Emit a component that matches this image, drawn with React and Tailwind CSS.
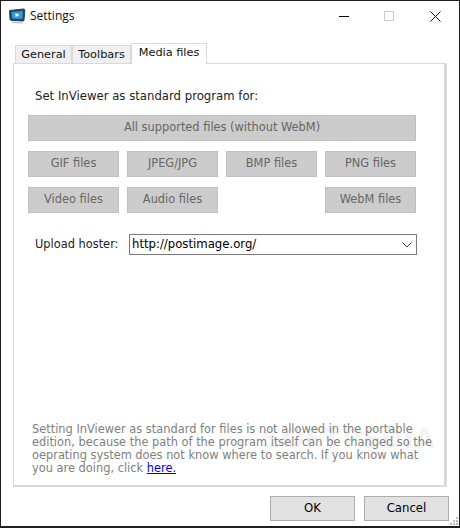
const font = "font-['DejaVu_Sans',sans-serif]";

function FileButton({ label, className = 'w-[91px]' }) {
  return (
    <div className={`${className} h-[26px] flex items-center justify-center bg-[#cccccc] border border-[#bfbfbf] text-[#666666] text-[11.4px]`}>
      {label}
    </div>
  );
}

function Tab({ label, active, className = '' }) {
  if (active) {
    return (
      <div className={`${className} relative z-10 h-[21px] -mb-px pb-[2px] flex items-center justify-center bg-white border border-b-0 border-[#d9d9d9] text-[11.3px] text-[#111111]`}>
        {label}
      </div>
    );
  }
  return (
    <div className={`${className} h-[18px] pt-px flex items-center justify-center bg-[#f0f0f0] border border-b-0 border-[#d9d9d9] text-[11.3px] text-[#111111]`}>
      {label}
    </div>
  );
}

export default function App() {
  return (
    <div className={`${font} relative w-[460px] h-[528px] flex flex-col bg-white border border-[#1f1f1f] border-b-2 overflow-hidden`}>
      {/* title bar */}
      <div className="h-[30px] flex items-center shrink-0">
        <svg width="18" height="16" viewBox="0 0 18 16" className="ml-[7px]">
          <path d="M1.5 2.5 L15.5 1 Q17 1 16.8 2.5 L16 12 Q16 13.2 14.8 13 L3.5 12.5 Q2 12.4 2 11 Z" fill="#2b4252" stroke="#2b4252" strokeWidth="1" />
          <path d="M3.5 4 L15 3 L14.4 11 L4 10.6 Z" fill="#2f9be0" />
          <path d="M7.5 5 L11.5 7 L7.5 9 Z" fill="#ffffff" />
          <path d="M4 14.5 L15 15" stroke="#b5b5b5" strokeWidth="1.2" />
        </svg>
        <span className="ml-[4px] text-[12px] text-[#111111] font-['Open_Sans',sans-serif]">Settings</span>
        <div className="ml-auto flex items-center">
          <div className="w-[10px] h-px bg-black mr-[35px]" />
          <div className="w-[10px] h-[10px] border border-[#cccccc] mr-[36px]" />
          <svg width="11" height="11" viewBox="0 0 11 11" className="mr-[18px]">
            <path d="M0.5 0.5 L10.5 10.5 M10.5 0.5 L0.5 10.5" stroke="#111111" strokeWidth="1" />
          </svg>
        </div>
      </div>

      {/* tabs */}
      <div className="ml-[12px] mt-[10px] w-[434px] flex flex-col">
        <div className="h-[22px] pl-[2px] flex items-end">
          <Tab label="General" className="w-[57px]" />
          <Tab label="Toolbars" className="w-[59px]" />
          <Tab label="Media files" className="w-[76px]" active />
        </div>
        <div className="relative h-[424px] pt-[24px] pl-[14px] flex flex-col border border-[#d9d9d9] border-r-[3px] border-b-2">
          <div className="pl-[7px] h-[17px] text-[11.7px] leading-[16px] text-[#222222]">Set InViewer as standard program for:</div>
          <div className="mt-[10px] flex flex-col gap-[10px] w-[388px]">
            <FileButton label="All supported files (without WebM)" className="w-full" />
            <div className="flex justify-between">
              <FileButton label="GIF files" />
              <FileButton label="JPEG/JPG" />
              <FileButton label="BMP files" />
              <FileButton label="PNG files" />
            </div>
            <div className="flex justify-between">
              <FileButton label="Video files" />
              <FileButton label="Audio files" />
              <div className="w-[91px]" />
              <FileButton label="WebM files" />
            </div>
          </div>
          <div className="mt-[21px] pl-[7px] flex items-center">
            <span className="w-[94px] text-[11.4px] text-[#222222]">Upload hoster:</span>
            <div className="w-[288px] h-[21px] pl-[2px] pr-[4px] flex items-center justify-between border border-[#7a7a7a] text-[11.7px] text-black">
              <span>http://postimage.org/</span>
              <svg width="10" height="6" viewBox="0 0 10 6">
                <path d="M0.5 0.5 L5 5 L9.5 0.5" fill="none" stroke="#444444" strokeWidth="1" />
              </svg>
            </div>
          </div>
          {/* faint watermark behind the note */}
          <div className="absolute left-[248px] bottom-[26px] text-[26px] font-bold tracking-[1px] text-[#f3f3f3]">SOFTPEDIA</div>
          <p className="relative mt-auto mb-[10px] ml-[4px] w-[400px] text-[11.4px] leading-[13px] text-[#808080]">
            Setting InViewer as standard for files is not allowed in the portable edition, because the path of the program itself can be changed so the oeprating system does not know where to search. If you know what you are doing, click <a className="text-[#0000ee] underline">here.</a>
          </p>
        </div>
      </div>

      {/* footer */}
      <div className="mt-[9px] pr-[10px] flex justify-end gap-[9px]">
        <div className="w-[85px] h-[25px] flex items-center justify-center bg-[#e1e1e1] border border-[#adadad] text-[11.7px] text-black">OK</div>
        <div className="w-[85px] h-[25px] flex items-center justify-center bg-[#e1e1e1] border border-[#adadad] text-[11.7px] text-black">Cancel</div>
      </div>

      {/* resize grip */}
      <svg width="9" height="9" viewBox="0 0 9 9" className="absolute right-0 bottom-0" fill="#bdbdbd">
        <rect x="6" y="0" width="2" height="2" />
        <rect x="3" y="3" width="2" height="2" />
        <rect x="6" y="3" width="2" height="2" />
        <rect x="0" y="6" width="2" height="2" />
        <rect x="3" y="6" width="2" height="2" />
        <rect x="6" y="6" width="2" height="2" />
      </svg>
    </div>
  );
}
